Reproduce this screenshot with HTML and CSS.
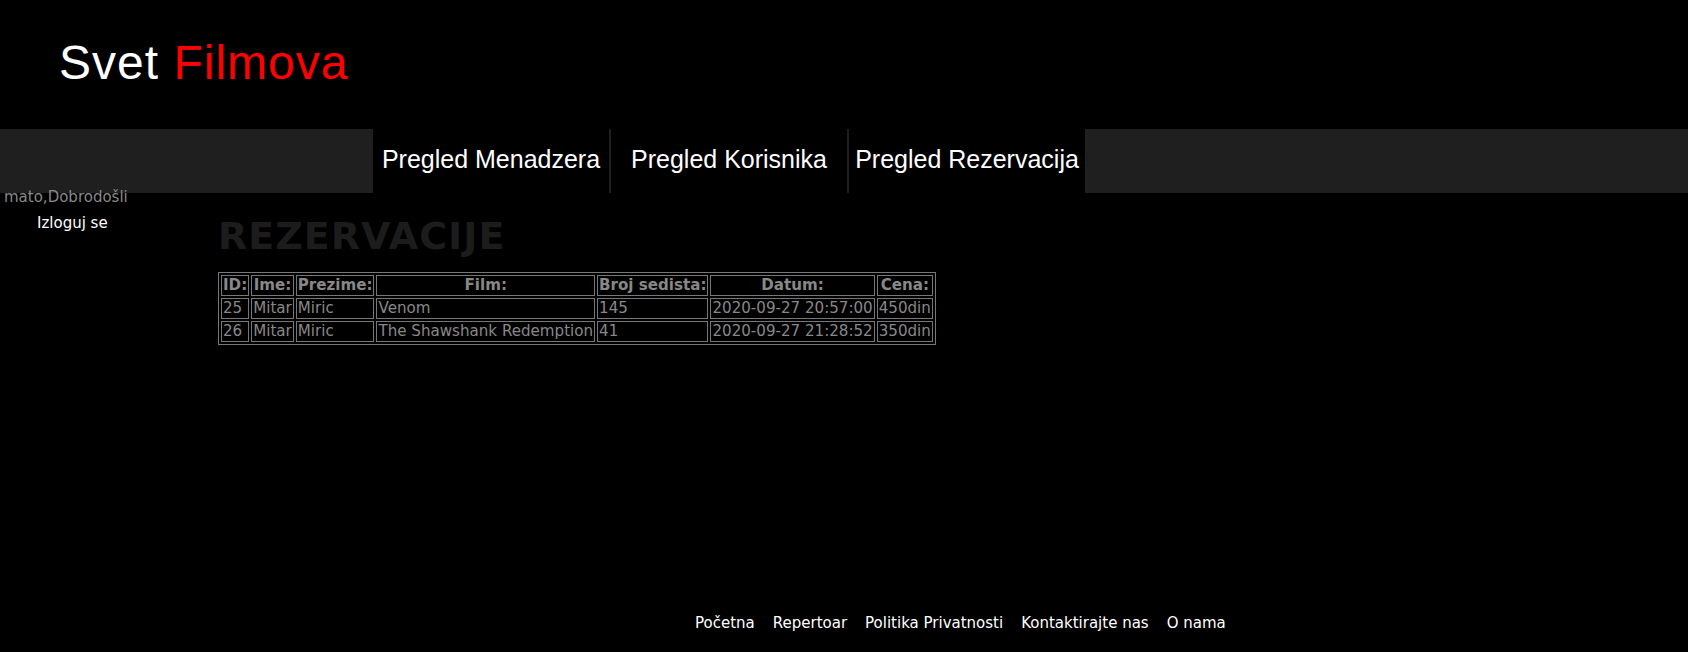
FILE: index.html
```html
<!DOCTYPE html>
<html lang="sr">
<head>
<meta charset="utf-8">
<title>Svet Filmova - Rezervacije</title>
<link rel="stylesheet" href="styles.css">
</head>
<body>
<div class="page">
  <header class="header">
    <h1 class="logo"><span class="logo-white">Svet</span> <span class="logo-red">Filmova</span></h1>
  </header>
  <div class="bar">
    <nav class="nav">
      <a class="nav-item" href="#">Pregled Menadzera</a>
      <a class="nav-item" href="#">Pregled Korisnika</a>
      <a class="nav-item" href="#">Pregled Rezervacija</a>
    </nav>
  </div>
  <div class="body-row">
    <aside class="sidebar">
      <div class="welcome">mato,Dobrodošli</div>
      <a class="logout" href="#">Izloguj se</a>
    </aside>
    <main class="main">
      <h2 class="heading">REZERVACIJE</h2>
      <table class="res-table">
        <thead>
          <tr><th>ID:</th><th>Ime:</th><th>Prezime:</th><th>Film:</th><th>Broj sedista:</th><th>Datum:</th><th>Cena:</th></tr>
        </thead>
        <tbody>
          <tr><td>25</td><td>Mitar</td><td>Miric</td><td>Venom</td><td>145</td><td>2020-09-27 20:57:00</td><td>450din</td></tr>
          <tr><td>26</td><td>Mitar</td><td>Miric</td><td>The Shawshank Redemption</td><td>41</td><td>2020-09-27 21:28:52</td><td>350din</td></tr>
        </tbody>
      </table>
    </main>
  </div>
  <footer class="footer">
    <a href="#">Početna</a>
    <a href="#">Repertoar</a>
    <a href="#">Politika Privatnosti</a>
    <a href="#">Kontaktirajte nas</a>
    <a href="#">O nama</a>
  </footer>
</div>
</body>
</html>
```
FILE: styles.css
```css
html, body {
  margin: 0;
  padding: 0;
  background: #000;
}
body {
  font-family: "DejaVu Sans", Verdana, sans-serif;
  font-size: 15px;
  color: #888;
}
a {
  text-decoration: none;
  color: #fff;
}
.page {
  min-height: 100vh;
  display: flex;
  flex-direction: column;
}
.header {
  height: 129px;
  box-sizing: border-box;
  padding: 35px 0 0 59px;
}
.logo {
  margin: 0;
  font-family: "Liberation Sans", Arial, sans-serif;
  font-weight: normal;
  font-size: 48px;
  letter-spacing: 1px;
}
.logo-white { color: #fff; }
.logo-red { color: #ff0000; }

.bar {
  height: 64px;
  background: #1f1f1f;
  display: flex;
  padding-left: 373px;
}
.nav {
  display: flex;
  gap: 2px;
  height: 100%;
}
.nav-item {
  width: 236px;
  background: #000;
  color: #fff;
  font-family: "Liberation Sans", Arial, sans-serif;
  font-size: 25px;
  line-height: 60px;
  padding-bottom: 4px;
  text-align: center;
  white-space: nowrap;
}

.body-row {
  display: flex;
}
.sidebar {
  width: 218px;
  flex: 0 0 218px;
}
.welcome {
  margin-top: -5px;
  padding-left: 4px;
  color: #888;
  white-space: nowrap;
}
.logout {
  display: block;
  margin: 8px 0 0 37px;
  color: #fff;
}
.main {
  padding-top: 21px;
}
.heading {
  margin: 0 0 14px 0;
  font-size: 38px;
  font-weight: bold;
  color: #1c1c1c;
  line-height: normal;
  letter-spacing: 1px;
}
.res-table {
  border: 1px solid #777;
  border-spacing: 2px;
  color: #888;
  font-size: 15.1px;
  line-height: 17px;
}
.res-table th,
.res-table td {
  border: 1px solid #777;
  padding: 1px;
  white-space: nowrap;
}
.res-table th {
  font-weight: bold;
  text-align: center;
}
.res-table td {
  text-align: left;
}

.footer {
  margin-top: auto;
  padding: 0 0 20px 695px;
  display: flex;
  gap: 18px;
  font-size: 15px;
}
.footer a {
  color: #fff;
}
```
